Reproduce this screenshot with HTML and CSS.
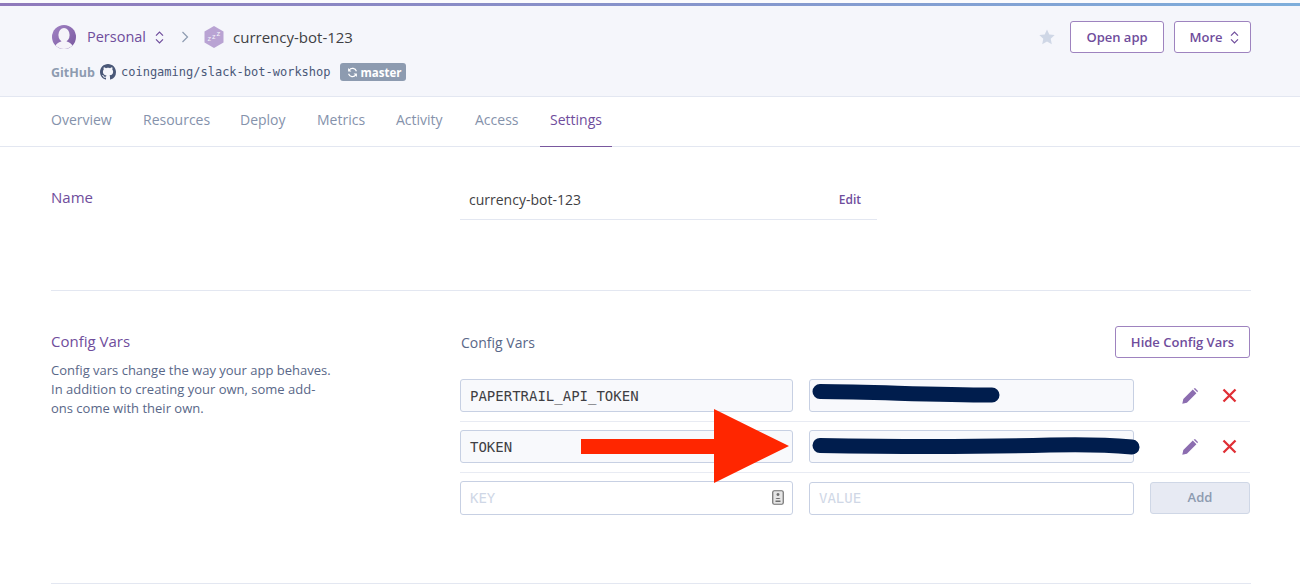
FILE: index.html
```html
<!DOCTYPE html>
<html>
<head>
<meta http-equiv="Content-Type" content="text/html; charset=utf-8"/>
<title>currency-bot-123 - Settings</title>
<link rel="stylesheet" href="styles.css">
</head>

<body>
<div class="topline"></div>

<header class="app-header">
  <div class="header-main">
    <div class="crumbs">
      <svg class="avatar" viewBox="0 0 24 24">
        <defs>
          <linearGradient id="avatar-bg" x1="0" y1="0" x2="1" y2="1">
            <stop offset="0" stop-color="#a183c4"/>
            <stop offset="1" stop-color="#79589f"/>
          </linearGradient>
        </defs>
        <circle cx="12" cy="12" r="12" fill="url(#avatar-bg)"/>
        <ellipse cx="12" cy="10" rx="5.600" ry="7" fill="#f5f3f9"/>
        <path d="M3.600 20.600c1.600-3 5-3.600 6.400-4.600h4c1.400 1 4.800 1.600 6.400 4.600A12 12 0 0 1 12 24a12 12 0 0 1-8.400-3.400z" fill="#f5f3f9"/>
      </svg>
      <span class="team">Personal</span>
      <svg class="updown" viewBox="0 0 9 13"><path d="M1 4.600 4.500 1 8 4.600M1 8.400 4.500 12 8 8.400"/></svg>
      <svg class="sep" viewBox="0 0 8 12"><path d="M1.500 1 6.500 6l-5 5"/></svg>
      <svg class="hex" viewBox="0 0 20 22">
        <path d="M10 0l9.500 5.500v11L10 22 .5 16.500v-11z" fill="#b9a3d3"/>
        <text x="3.500" y="15" font-size="7.500">z</text>
        <text x="8" y="12.500" font-size="7.500">z</text>
        <text x="12.500" y="10" font-size="8">z</text>
      </svg>
      <span class="app-name">currency-bot-123</span>
    </div>
    <div class="repo">
      <b class="repo-label">GitHub</b>
      <svg class="octo" viewBox="0 0 16 16"><path d="M8 0C3.580 0 0 3.580 0 8c0 3.540 2.290 6.530 5.470 7.590.4.070.55-.17.55-.38 0-.19-.01-.82-.01-1.490-2.010.37-2.530-.49-2.690-.94-.09-.23-.48-.94-.82-1.130-.28-.15-.68-.52-.01-.53.63-.01 1.080.58 1.230.82.72 1.210 1.870.87 2.330.66.07-.52.28-.87.51-1.070-1.780-.2-3.640-.89-3.640-3.950 0-.87.31-1.590.82-2.150-.08-.2-.36-1.020.08-2.120 0 0 .67-.21 2.200.82.64-.18 1.320-.27 2-.27.68 0 1.360.09 2 .27 1.530-1.040 2.200-.82 2.200-.82.44 1.100.16 1.920.08 2.120.51.56.82 1.270.82 2.150 0 3.070-1.870 3.750-3.650 3.950.29.25.54.73.54 1.480 0 1.070-.01 1.930-.01 2.200 0 .21.15.46.55.38A8.013 8.013 0 0 0 16 8c0-4.420-3.580-8-8-8z"/></svg>
      <span class="repo-name">coingaming/slack-bot-workshop</span>
      <span class="branch">
        <svg viewBox="0 0 12 12"><path d="M10.300 4.600A4.500 4.500 0 0 0 2.400 3.300M1.700 7.400a4.500 4.500 0 0 0 7.900 1.300"/><path class="fill" d="M1.200 1.200v3.600h3.600zM10.800 10.800V7.200H7.200z"/></svg>
        master
      </span>
    </div>
  </div>
  <div class="header-actions">
    <svg class="star" viewBox="0 0 16 16"><path d="M8 .5l2.300 5 5.400.6-4 3.700 1.100 5.400L8 12.500l-4.800 2.700 1.100-5.400-4-3.700 5.400-.6z"/></svg>
    <a class="btn btn-open">Open app</a>
    <a class="btn btn-more">More
      <svg class="updown" viewBox="0 0 9 13"><path d="M1 4.600 4.500 1 8 4.600M1 8.400 4.500 12 8 8.400"/></svg>
    </a>
  </div>
</header>

<nav class="tabs">
  <a>Overview</a>
  <a>Resources</a>
  <a>Deploy</a>
  <a>Metrics</a>
  <a>Activity</a>
  <a>Access</a>
  <a class="active">Settings</a>
</nav>

<main class="settings">
  <section class="row row-name">
    <div class="side">
      <h3>Name</h3>
    </div>
    <div class="name-field">
      <span>currency-bot-123</span>
      <a class="edit">Edit</a>
    </div>
  </section>

  <section class="row row-vars">
    <div class="side">
      <h3>Config Vars</h3>
      <p>Config vars change the way your app behaves. In addition to creating your own, some add-ons come with their own.</p>
    </div>
    <div class="vars">
      <div class="vars-head">
        <span>Config Vars</span>
        <a class="btn btn-hide">Hide Config Vars</a>
      </div>
      <div class="var-row">
        <div class="field filled">PAPERTRAIL_API_TOKEN</div>
        <div class="field filled"></div>
        <div class="var-icons">
          <svg class="pencil" viewBox="0 0 16 16"><path d="M.3 15.700l1-4.600L10.800 1.600l3.600 3.600-9.500 9.500zM11.700.7 13 0l3 3-.7 1.300z"/></svg>
          <svg class="cross" viewBox="0 0 15 15"><path d="M1.500 1.500l12 12M13.500 1.500l-12 12"/></svg>
        </div>
      </div>
      <div class="var-row">
        <div class="field filled">TOKEN</div>
        <div class="field filled"></div>
        <div class="var-icons">
          <svg class="pencil" viewBox="0 0 16 16"><path d="M.3 15.700l1-4.600L10.800 1.600l3.600 3.600-9.500 9.500zM11.700.7 13 0l3 3-.7 1.300z"/></svg>
          <svg class="cross" viewBox="0 0 15 15"><path d="M1.500 1.500l12 12M13.500 1.500l-12 12"/></svg>
        </div>
      </div>
      <div class="var-row var-new">
        <div class="field empty key">KEY
          <svg class="contact" viewBox="0 0 12 15">
            <rect x=".75" y=".75" width="10.500" height="13.500" rx="1.500"/>
            <path class="fill" d="M6 3a1.500 1.500 0 1 1-.01 0zM3.500 9c0-1.500 5-1.500 5 0zM3.500 10.500h5V12h-5z"/>
          </svg>
        </div>
        <div class="field empty">VALUE</div>
        <a class="btn-add">Add</a>
      </div>
    </div>
  </section>
</main>

<!-- hand drawn marks on top of the screenshot -->
<svg class="marks" viewBox="0 0 1300 584">
  <path class="scribble" d="M820 391.500C880 392 930 395 992 395"/>
  <path class="scribble" d="M820 445.500C900 447 980 447 1050 445C1085 444 1110 445 1132 447"/>
  <path class="arrow" d="M581 439H714V409L789 446L714 483V454H581z"/>
</svg>
</body>
</html>
```
FILE: styles.css
```css
body {
  margin: 0;
  height: 584px;
  overflow: hidden;
  position: relative;
  background-color: white;
  font-family: "Open Sans", "Noto Sans", sans-serif;
  font-size: 14px;
  color: #3f3f44;
}

a {
  cursor: pointer;
}

.topline {
  height: 3px;
  border-top: 3px solid #fbfbfd;
  background: linear-gradient(to right, #8f79bb, #7eaedb);
}

/* header */
.app-header {
  height: 91px;
  box-sizing: border-box;
  padding: 0 49px 0 51px;
  display: flex;
  justify-content: space-between;
  background-color: #f5f6fb;
  border-bottom: 1px solid #e3e7f1;
}

.crumbs {
  display: flex;
  align-items: center;
  height: 24px;
  margin-top: 19px;
  line-height: 22px;
}

.avatar {
  width: 24px;
  height: 24px;
  margin-left: 1px;
}

.team {
  margin-left: 11px;
  font-size: 14.500px;
  color: #6f4d9c;
}

.updown {
  width: 9px;
  height: 13px;
  fill: none;
  stroke: #6f4d9c;
  stroke-width: 1.200;
}

.crumbs .updown {
  margin-left: 9px;
}

.sep {
  width: 8px;
  height: 12px;
  margin-left: 17px;
  fill: none;
  stroke: #8d9bb0;
  stroke-width: 1.200;
}

.hex {
  width: 20px;
  height: 22px;
  margin-left: 15px;
}

.hex text {
  fill: #f5f6fb;
  font-family: "Open Sans", sans-serif;
}

.app-name {
  margin-left: 9px;
  font-size: 15px;
}

.repo {
  display: flex;
  align-items: center;
  height: 18px;
  margin-top: 14px;
}

.repo-label {
  font-size: 12.500px;
  color: #8d9bb0;
}

.octo {
  width: 16px;
  height: 16px;
  margin-left: 5px;
  fill: #4a5878;
}

.repo-name {
  margin-left: 5px;
  font-family: "DejaVu Sans Mono", monospace;
  font-size: 12px;
  color: #4a5878;
}

.branch {
  display: flex;
  align-items: center;
  gap: 3px;
  height: 18px;
  margin-left: 9px;
  padding: 0 5px 0 7px;
  border-radius: 3px;
  background-color: #8d9bb0;
  color: white;
  font-size: 11.500px;
  font-weight: 700;
}

.branch svg {
  width: 11px;
  height: 11px;
  fill: none;
  stroke: white;
  stroke-width: 1.300;
}

.branch svg .fill {
  fill: white;
  stroke: none;
}

.header-actions {
  display: flex;
  align-items: flex-start;
  padding-top: 15px;
}

.star {
  width: 16px;
  height: 16px;
  margin: 8px 15px 0 0;
  fill: #cfd7e6;
}

.btn {
  display: flex;
  align-items: center;
  justify-content: center;
  box-sizing: border-box;
  height: 32px;
  border: 1px solid #9e83bf;
  border-radius: 3px;
  background-color: white;
  color: #6f4d9c;
  font-size: 13px;
  font-weight: 600;
}

.btn-open {
  width: 94px;
}

.btn-more {
  width: 77px;
  gap: 7px;
  margin-left: 10px;
  padding-left: 3px;
}

/* tabs */
.tabs {
  display: grid;
  grid-template-columns: 92px 97px 77px 79px 79px 75px 72px;
  height: 50px;
  box-sizing: border-box;
  padding-left: 41px;
  border-bottom: 1px solid #e3e7f1;
}

.tabs a {
  padding: 0 10px;
  line-height: 46px;
  color: #8592ab;
}

.tabs a.active {
  height: 50px;
  box-sizing: border-box;
  color: #6f4d9c;
  border-bottom: 1px solid #79589f;
}

/* settings rows */
.settings {
  margin: 0 49px 0 51px;
}

.row {
  display: flex;
  border-bottom: 1px solid #e3e7f1;
  box-sizing: border-box;
}

.row-name {
  height: 144px;
  padding-top: 33px;
}

.row-vars {
  height: 293px;
  padding-top: 35px;
}

.side {
  width: 409px;
  flex: none;
}

.side h3 {
  margin: 7px 0 0;
  font-size: 15px;
  font-weight: 400;
  line-height: 20px;
  color: #6f4d9c;
}

.row-vars .side h3 {
  margin-top: 5px;
}

.side p {
  width: 280px;
  margin: 10px 0 0;
  font-size: 13px;
  line-height: 19px;
  color: #596788;
}

.name-field {
  display: flex;
  justify-content: space-between;
  align-items: center;
  box-sizing: border-box;
  width: 417px;
  height: 40px;
  padding: 0 16px 0 9px;
  border-bottom: 1px solid #e3e7f1;
}

.edit {
  font-size: 12px;
  font-weight: 600;
  color: #6f4d9c;
}

.vars {
  width: 790px;
}

.vars-head {
  display: flex;
  justify-content: space-between;
  align-items: center;
  padding-left: 1px;
  margin-bottom: 21px;
  color: #596788;
}

.btn-hide {
  width: 135px;
}

.var-row {
  display: grid;
  grid-template-columns: 333px 325px 100px;
  column-gap: 16px;
  align-items: center;
  height: 43px;
  box-sizing: border-box;
  padding-bottom: 9px;
  margin-bottom: 8px;
  border-bottom: 1px solid #e8ebf3;
}

.var-new {
  border-bottom: none;
}

.field {
  position: relative;
  box-sizing: border-box;
  height: 33px;
  line-height: 33px;
  padding: 0 9px;
  border: 1px solid #c7d0e3;
  border-radius: 3px;
  font-family: "DejaVu Sans Mono", monospace;
  font-size: 14px;
}

.filled {
  background-color: #f8f9fc;
}

.empty {
  line-height: 30px;
  color: #cfd7e6;
}

.key {
  height: 34px;
  line-height: 32px;
}

.contact {
  position: absolute;
  right: 8px;
  top: 8px;
  width: 12px;
  height: 15px;
  fill: #e6e6e6;
  stroke: #6f6f6f;
  stroke-width: 1.200;
}

.contact .fill {
  fill: #6f6f6f;
  stroke: none;
}

.var-icons {
  display: flex;
  align-items: center;
  padding-left: 32px;
  gap: 24px;
}

.pencil {
  width: 16px;
  height: 16px;
  fill: #8c6db0;
}

.cross {
  width: 15px;
  height: 15px;
  fill: none;
  stroke: #e02f36;
  stroke-width: 2.300;
}

.btn-add {
  box-sizing: border-box;
  height: 32px;
  line-height: 28px;
  text-align: center;
  border: 1px solid #cfd7e6;
  border-radius: 3px;
  background-color: #e7eaf3;
  color: #8d9bb0;
  font-size: 13px;
  font-weight: 600;
}

/* marks drawn over the page */
.marks {
  position: absolute;
  left: 0;
  top: 0;
  width: 1300px;
  height: 584px;
  pointer-events: none;
}

.scribble {
  fill: none;
  stroke: #001d4d;
  stroke-width: 15;
  stroke-linecap: round;
}

.arrow {
  fill: #ff2600;
}
```
